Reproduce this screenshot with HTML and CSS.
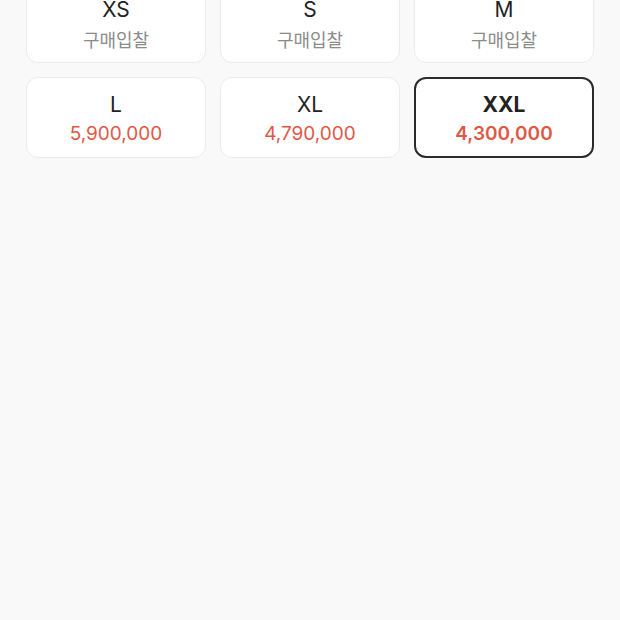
FILE: index.html
```html
<!DOCTYPE html>
<html lang="ko">
<head>
<meta charset="utf-8">
<link rel="stylesheet" href="styles.css">
</head>
<body>
<div class="sizes">
  <div class="card"><div class="size">XS</div><div class="sub">구매입찰</div></div>
  <div class="card"><div class="size">S</div><div class="sub">구매입찰</div></div>
  <div class="card"><div class="size">M</div><div class="sub">구매입찰</div></div>
  <div class="card"><div class="size">L</div><div class="price">5,900,000</div></div>
  <div class="card"><div class="size">XL</div><div class="price">4,790,000</div></div>
  <div class="card selected"><div class="size">XXL</div><div class="price">4,300,000</div></div>
</div>
</body>
</html>
```
FILE: styles.css
```css
html, body {
  margin: 0;
  padding: 0;
  background: #f9f9f9;
  height: 100%;
  overflow: hidden;
}
body {
  font-family: Inter, "Noto Sans CJK KR", sans-serif;
}
.sizes {
  display: grid;
  grid-template-columns: repeat(3, 180px);
  gap: 14px;
  padding: 0 26px;
  margin-top: -18px;
}
.card {
  box-sizing: border-box;
  height: 81px;
  padding-top: 2px;
  background: #fff;
  border: 1px solid #ebebeb;
  border-radius: 12px;
  display: flex;
  flex-direction: column;
  align-items: center;
  justify-content: center;
  gap: 4px;
}
.size {
  font-size: 21px;
  line-height: 26px;
  color: #222;
}
.sub {
  font-family: "Noto Sans CJK KR", sans-serif;
  font-size: 18px;
  line-height: 24px;
  color: #8b8b8b;
}
.price {
  font-size: 19px;
  line-height: 24px;
  color: #df5846;
}
.selected {
  border: 2px solid #2b2b2b;
}
.selected .size {
  font-weight: 700;
}
.selected .price {
  font-weight: 600;
}
```
